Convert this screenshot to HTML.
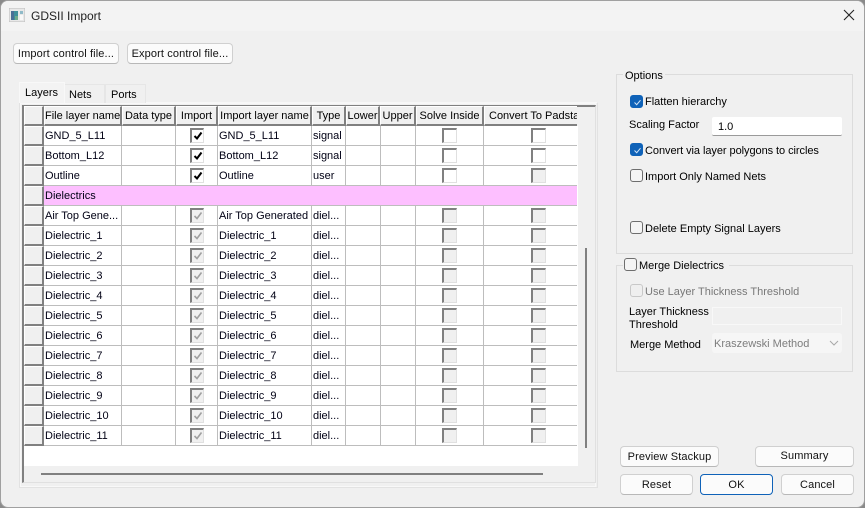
<!DOCTYPE html>
<html><head><meta charset="utf-8"><title>GDSII Import</title>
<style>
html,body{margin:0;padding:0;width:865px;height:508px;overflow:hidden;background:#8a8a8a}
*{box-sizing:border-box}
body{font-family:"Liberation Sans",sans-serif;font-size:11px;color:#000}
#win{position:absolute;left:0;top:0;width:865px;height:508px;background:#f0f0f0;border:1px solid #a0a0a0;border-radius:8px;overflow:hidden}
#tb{position:absolute;left:0;top:0;width:863px;height:30px;background:#f3f3f3}
.a{position:absolute;white-space:nowrap;line-height:14px}
.btn{position:absolute;background:#fbfbfb;border:1px solid #d0d0d0;border-bottom-color:#b8b8b8;border-radius:4px;text-align:center;white-space:nowrap;line-height:21px;color:#111;letter-spacing:.12px}
.tab{position:absolute;text-align:left;line-height:17px}
.h{position:absolute;top:106px;height:20px;background:#f0f0f0;border-top:1px solid #fff;border-left:1px solid #fff;border-right:2px solid #808080;border-bottom:2px solid #808080;line-height:19px;text-align:center;white-space:nowrap;overflow:hidden}
.rh{position:absolute;left:24px;width:20px;height:20px;background:#f0f0f0;border-top:1px solid #fff;border-left:1px solid #fff;border-right:2px solid #808080;border-bottom:2px solid #808080}
.gl{position:absolute;background:#bdbdbd}
.t{position:absolute;white-space:nowrap;line-height:14px;color:#000014;margin-top:1px}
.c{position:absolute;width:15px;height:15px;background:#fff;border-top:2px solid #808080;border-left:2px solid #808080;border-right:1px solid #e0e0e0;border-bottom:1px solid #e0e0e0}
.c.g{background:#f0f0f0}
.c svg{position:absolute;left:0;top:0}
.i{width:14px}
.cb{position:absolute;width:13px;height:13px;border-radius:3px;background:#f4f4f4;border:1px solid #6e6e6e}
.cb.on{background:#0f62b8;border-color:#0f62b8}
.cb.dis{border-color:#c8c8c8;background:#efefef}
.cb svg{position:absolute;left:1px;top:1px}
.gb{position:absolute;border:1px solid #dcdcdc}
.l{margin-top:1px}
</style></head><body>
<div id="win">
<div id="tb"></div>
</div>

<!-- title bar -->
<svg class="a" style="left:9px;top:8px" width="16" height="14" viewBox="0 0 16 14"><rect x="0" y="0" width="16" height="14" fill="#e8e8e8" stroke="#bdbdbd"/><rect x="2" y="3" width="7" height="9" fill="#3f8f9a"/><rect x="2" y="3" width="3" height="9" fill="#4a6f96"/><rect x="6" y="8" width="3" height="4" fill="#6fa98a"/><rect x="11" y="3" width="3" height="3" fill="#8fbac8"/><rect x="11" y="7" width="3" height="5" fill="#f8f8f8"/></svg>
<div class="a" style="left:31px;top:9px;font-size:12px;color:#222">GDSII Import</div>
<svg class="a" style="left:843px;top:9px" width="12" height="12" viewBox="0 0 12 12"><path d="M1 1L11 11M11 1L1 11" stroke="#222" stroke-width="1.1" fill="none"/></svg>

<!-- top buttons -->
<div class="btn" style="left:13px;top:43px;width:106px;height:21px">Import control file...</div>
<div class="btn" style="left:127px;top:43px;width:106px;height:21px">Export control file...</div>

<!-- tab pane -->
<div class="a" style="left:19px;top:102px;width:579px;height:386px;border:1px solid #e2e2e2;border-top:1px solid #f8f8f8;background:#f0f0f0"></div>
<div class="a" style="left:20px;top:103px;width:576px;height:384px;border:1px solid #f8f8f8"></div>
<div class="tab" style="left:64px;top:84px;width:41px;height:19px;background:#f0f0f0;border:1px solid #e6e6e6;border-bottom:0;padding:2px 0 0 4px">Nets</div>
<div class="tab" style="left:105px;top:84px;width:41px;height:19px;background:#f0f0f0;border:1px solid #e6e6e6;border-bottom:0;padding:2px 0 0 5px">Ports</div>
<div class="tab" style="left:19px;top:82px;width:46px;height:21px;background:#f3f3f3;border:1px solid #f8f8f8;border-bottom:0;padding:2px 0 0 5px">Layers</div>

<!-- table frame -->
<div class="a" style="left:22px;top:105px;width:574px;height:378px;border-top:2px solid #808080;border-left:2px solid #808080;border-right:1px solid #e0e0e0;border-bottom:1px solid #e0e0e0;background:#f0f0f0"></div>
<div class="a" style="left:24px;top:126px;width:554px;height:340px;background:#fff"></div>
<div class="a" style="left:41px;top:473px;width:502px;height:2px;background:#808080"></div>
<div class="a" style="left:585px;top:248px;width:2px;height:200px;background:#808080"></div>

<!-- header -->
<div class="h" style="left:24px;width:20px"></div>
<div class="h" style="left:44px;width:78px">File layer name</div>
<div class="h" style="left:122px;width:54px">Data type</div>
<div class="h" style="left:176px;width:42px">Import</div>
<div class="h" style="left:218px;width:94px">Import layer name</div>
<div class="h" style="left:312px;width:34px">Type</div>
<div class="h" style="left:346px;width:34px">Lower</div>
<div class="h" style="left:380px;width:36px">Upper</div>
<div class="h" style="left:416px;width:68px">Solve Inside</div>
<div class="h" style="left:484px;width:93px;text-align:left;padding-left:4px;border-right:0">Convert To Padstack</div>

<!-- pink row -->
<div class="a" style="left:44px;top:185px;width:533px;height:21px;background:#fdbfff"></div>

<!-- vertical grid lines -->
<div class="gl" style="left:121px;top:126px;width:1px;height:59px"></div><div class="gl" style="left:121px;top:206px;width:1px;height:240px"></div>
<div class="gl" style="left:175px;top:126px;width:1px;height:59px"></div><div class="gl" style="left:175px;top:206px;width:1px;height:240px"></div>
<div class="gl" style="left:217px;top:126px;width:1px;height:59px"></div><div class="gl" style="left:217px;top:206px;width:1px;height:240px"></div>
<div class="gl" style="left:311px;top:126px;width:1px;height:59px"></div><div class="gl" style="left:311px;top:206px;width:1px;height:240px"></div>
<div class="gl" style="left:345px;top:126px;width:1px;height:59px"></div><div class="gl" style="left:345px;top:206px;width:1px;height:240px"></div>
<div class="gl" style="left:380px;top:126px;width:1px;height:59px"></div><div class="gl" style="left:380px;top:206px;width:1px;height:240px"></div>
<div class="gl" style="left:415px;top:126px;width:1px;height:59px"></div><div class="gl" style="left:415px;top:206px;width:1px;height:240px"></div>
<div class="gl" style="left:483px;top:126px;width:1px;height:59px"></div><div class="gl" style="left:483px;top:206px;width:1px;height:240px"></div>

<!-- horizontal grid lines -->
<div class="gl" style="left:44px;top:145px;width:533px;height:1px"></div>
<div class="gl" style="left:44px;top:165px;width:533px;height:1px"></div>
<div class="gl" style="left:44px;top:185px;width:533px;height:1px"></div>
<div class="gl" style="left:44px;top:205px;width:533px;height:1px"></div>
<div class="gl" style="left:44px;top:225px;width:533px;height:1px"></div>
<div class="gl" style="left:44px;top:245px;width:533px;height:1px"></div>
<div class="gl" style="left:44px;top:265px;width:533px;height:1px"></div>
<div class="gl" style="left:44px;top:285px;width:533px;height:1px"></div>
<div class="gl" style="left:44px;top:305px;width:533px;height:1px"></div>
<div class="gl" style="left:44px;top:325px;width:533px;height:1px"></div>
<div class="gl" style="left:44px;top:345px;width:533px;height:1px"></div>
<div class="gl" style="left:44px;top:365px;width:533px;height:1px"></div>
<div class="gl" style="left:44px;top:385px;width:533px;height:1px"></div>
<div class="gl" style="left:44px;top:405px;width:533px;height:1px"></div>
<div class="gl" style="left:44px;top:425px;width:533px;height:1px"></div>
<div class="gl" style="left:44px;top:445px;width:533px;height:1px"></div>

<!-- row headers -->
<div class="rh" style="top:126px"></div><div class="rh" style="top:146px"></div><div class="rh" style="top:166px"></div><div class="rh" style="top:186px"></div><div class="rh" style="top:206px"></div><div class="rh" style="top:226px"></div><div class="rh" style="top:246px"></div><div class="rh" style="top:266px"></div><div class="rh" style="top:286px"></div><div class="rh" style="top:306px"></div><div class="rh" style="top:326px"></div><div class="rh" style="top:346px"></div><div class="rh" style="top:366px"></div><div class="rh" style="top:386px"></div><div class="rh" style="top:406px"></div><div class="rh" style="top:426px"></div>

<!-- column text -->
<div class="t" style="left:45px;top:128px">GND_5_L11</div><div class="t" style="left:219px;top:128px">GND_5_L11</div><div class="t" style="left:313px;top:128px">signal</div>
<div class="t" style="left:45px;top:148px">Bottom_L12</div><div class="t" style="left:219px;top:148px">Bottom_L12</div><div class="t" style="left:313px;top:148px">signal</div>
<div class="t" style="left:45px;top:168px">Outline</div><div class="t" style="left:219px;top:168px">Outline</div><div class="t" style="left:313px;top:168px">user</div>
<div class="t" style="left:45px;top:188px">Dielectrics</div>
<div class="t" style="left:45px;top:208px">Air Top Gene...</div><div class="t" style="left:219px;top:208px">Air Top Generated</div><div class="t" style="left:313px;top:208px">diel...</div>
<div class="t" style="left:45px;top:228px">Dielectric_1</div><div class="t" style="left:219px;top:228px">Dielectric_1</div><div class="t" style="left:313px;top:228px">diel...</div>
<div class="t" style="left:45px;top:248px">Dielectric_2</div><div class="t" style="left:219px;top:248px">Dielectric_2</div><div class="t" style="left:313px;top:248px">diel...</div>
<div class="t" style="left:45px;top:268px">Dielectric_3</div><div class="t" style="left:219px;top:268px">Dielectric_3</div><div class="t" style="left:313px;top:268px">diel...</div>
<div class="t" style="left:45px;top:288px">Dielectric_4</div><div class="t" style="left:219px;top:288px">Dielectric_4</div><div class="t" style="left:313px;top:288px">diel...</div>
<div class="t" style="left:45px;top:308px">Dielectric_5</div><div class="t" style="left:219px;top:308px">Dielectric_5</div><div class="t" style="left:313px;top:308px">diel...</div>
<div class="t" style="left:45px;top:328px">Dielectric_6</div><div class="t" style="left:219px;top:328px">Dielectric_6</div><div class="t" style="left:313px;top:328px">diel...</div>
<div class="t" style="left:45px;top:348px">Dielectric_7</div><div class="t" style="left:219px;top:348px">Dielectric_7</div><div class="t" style="left:313px;top:348px">diel...</div>
<div class="t" style="left:45px;top:368px">Dielectric_8</div><div class="t" style="left:219px;top:368px">Dielectric_8</div><div class="t" style="left:313px;top:368px">diel...</div>
<div class="t" style="left:45px;top:388px">Dielectric_9</div><div class="t" style="left:219px;top:388px">Dielectric_9</div><div class="t" style="left:313px;top:388px">diel...</div>
<div class="t" style="left:45px;top:408px">Dielectric_10</div><div class="t" style="left:219px;top:408px">Dielectric_10</div><div class="t" style="left:313px;top:408px">diel...</div>
<div class="t" style="left:45px;top:428px">Dielectric_11</div><div class="t" style="left:219px;top:428px">Dielectric_11</div><div class="t" style="left:313px;top:428px">diel...</div>

<!-- import checkboxes -->
<div class="c i" style="left:190px;top:128px"><svg width="12" height="12"><path d="M2.5 6L5 8.5L9.5 2.5" stroke="#000" stroke-width="2" fill="none"/></svg></div>
<div class="c i" style="left:190px;top:148px"><svg width="12" height="12"><path d="M2.5 6L5 8.5L9.5 2.5" stroke="#000" stroke-width="2" fill="none"/></svg></div>
<div class="c i" style="left:190px;top:168px"><svg width="12" height="12"><path d="M2.5 6L5 8.5L9.5 2.5" stroke="#000" stroke-width="2" fill="none"/></svg></div>
<div class="c g i" style="left:190px;top:208px"><svg width="12" height="12"><path d="M2.5 6L5 8.5L9.5 2.5" stroke="#a0a0a0" stroke-width="1.6" fill="none"/></svg></div>
<div class="c g i" style="left:190px;top:228px"><svg width="12" height="12"><path d="M2.5 6L5 8.5L9.5 2.5" stroke="#a0a0a0" stroke-width="1.6" fill="none"/></svg></div>
<div class="c g i" style="left:190px;top:248px"><svg width="12" height="12"><path d="M2.5 6L5 8.5L9.5 2.5" stroke="#a0a0a0" stroke-width="1.6" fill="none"/></svg></div>
<div class="c g i" style="left:190px;top:268px"><svg width="12" height="12"><path d="M2.5 6L5 8.5L9.5 2.5" stroke="#a0a0a0" stroke-width="1.6" fill="none"/></svg></div>
<div class="c g i" style="left:190px;top:288px"><svg width="12" height="12"><path d="M2.5 6L5 8.5L9.5 2.5" stroke="#a0a0a0" stroke-width="1.6" fill="none"/></svg></div>
<div class="c g i" style="left:190px;top:308px"><svg width="12" height="12"><path d="M2.5 6L5 8.5L9.5 2.5" stroke="#a0a0a0" stroke-width="1.6" fill="none"/></svg></div>
<div class="c g i" style="left:190px;top:328px"><svg width="12" height="12"><path d="M2.5 6L5 8.5L9.5 2.5" stroke="#a0a0a0" stroke-width="1.6" fill="none"/></svg></div>
<div class="c g i" style="left:190px;top:348px"><svg width="12" height="12"><path d="M2.5 6L5 8.5L9.5 2.5" stroke="#a0a0a0" stroke-width="1.6" fill="none"/></svg></div>
<div class="c g i" style="left:190px;top:368px"><svg width="12" height="12"><path d="M2.5 6L5 8.5L9.5 2.5" stroke="#a0a0a0" stroke-width="1.6" fill="none"/></svg></div>
<div class="c g i" style="left:190px;top:388px"><svg width="12" height="12"><path d="M2.5 6L5 8.5L9.5 2.5" stroke="#a0a0a0" stroke-width="1.6" fill="none"/></svg></div>
<div class="c g i" style="left:190px;top:408px"><svg width="12" height="12"><path d="M2.5 6L5 8.5L9.5 2.5" stroke="#a0a0a0" stroke-width="1.6" fill="none"/></svg></div>
<div class="c g i" style="left:190px;top:428px"><svg width="12" height="12"><path d="M2.5 6L5 8.5L9.5 2.5" stroke="#a0a0a0" stroke-width="1.6" fill="none"/></svg></div>

<!-- solve inside checkboxes -->
<div class="c" style="left:442px;top:128px"></div><div class="c" style="left:442px;top:148px"></div><div class="c" style="left:442px;top:168px"></div>
<div class="c g" style="left:442px;top:208px"></div><div class="c g" style="left:442px;top:228px"></div><div class="c g" style="left:442px;top:248px"></div><div class="c g" style="left:442px;top:268px"></div><div class="c g" style="left:442px;top:288px"></div><div class="c g" style="left:442px;top:308px"></div><div class="c g" style="left:442px;top:328px"></div><div class="c g" style="left:442px;top:348px"></div><div class="c g" style="left:442px;top:368px"></div><div class="c g" style="left:442px;top:388px"></div><div class="c g" style="left:442px;top:408px"></div><div class="c g" style="left:442px;top:428px"></div>

<!-- convert checkboxes -->
<div class="c" style="left:531px;top:128px"></div><div class="c" style="left:531px;top:148px"></div><div class="c g" style="left:531px;top:168px"></div>
<div class="c g" style="left:531px;top:208px"></div><div class="c g" style="left:531px;top:228px"></div><div class="c g" style="left:531px;top:248px"></div><div class="c g" style="left:531px;top:268px"></div><div class="c g" style="left:531px;top:288px"></div><div class="c g" style="left:531px;top:308px"></div><div class="c g" style="left:531px;top:328px"></div><div class="c g" style="left:531px;top:348px"></div><div class="c g" style="left:531px;top:368px"></div><div class="c g" style="left:531px;top:388px"></div><div class="c g" style="left:531px;top:408px"></div><div class="c g" style="left:531px;top:428px"></div>

<!-- options group -->
<div class="gb" style="left:616px;top:74px;width:237px;height:180px"></div>
<div class="a l" style="left:623px;top:68px;background:#f0f0f0;padding:0 2px">Options</div>
<div class="cb on" style="left:630px;top:95px"><svg width="11" height="11"><path d="M2.5 5.5L4.7 7.7L8.5 3.2" stroke="#cfe3f7" stroke-width="1" fill="none"/></svg></div>
<div class="a l" style="left:645px;top:94px">Flatten hierarchy</div>
<div class="a l" style="left:629px;top:117px">Scaling Factor</div>
<div class="a" style="left:712px;top:117px;width:130px;height:19px;background:#fff;border-bottom:1px solid #9a9a9a;border-radius:2px;padding:3px 6px;line-height:14px">1.0</div>
<div class="cb on" style="left:630px;top:143px"><svg width="11" height="11"><path d="M2.5 5.5L4.7 7.7L8.5 3.2" stroke="#cfe3f7" stroke-width="1" fill="none"/></svg></div>
<div class="a l" style="left:645px;top:143px;letter-spacing:-.06px">Convert via layer polygons to circles</div>
<div class="cb" style="left:630px;top:169px"></div>
<div class="a l" style="left:645px;top:169px">Import Only Named Nets</div>
<div class="cb" style="left:630px;top:221px"></div>
<div class="a l" style="left:645px;top:221px">Delete Empty Signal Layers</div>

<!-- merge group -->
<div class="gb" style="left:616px;top:265px;width:237px;height:107px"></div>
<div class="a" style="left:623px;top:258px;width:106px;height:14px;background:#f0f0f0"></div>
<div class="cb" style="left:624px;top:258px"></div>
<div class="a l" style="left:639px;top:258px">Merge Dielectrics</div>
<div class="cb dis" style="left:630px;top:284px"></div>
<div class="a l" style="left:645px;top:284px;color:#787878">Use Layer Thickness Threshold</div>
<div class="a l" style="left:629px;top:304px">Layer Thickness</div>
<div class="a l" style="left:629px;top:317px">Threshold</div>
<div class="a" style="left:712px;top:307px;width:130px;height:18px;background:#f0f0f0;border:1px solid #f8f8f8"></div>
<div class="a l" style="left:630px;top:337px">Merge Method</div>
<div class="a" style="left:712px;top:333px;width:130px;height:20px;background:#f6f6f6;border-radius:3px;padding:4px 2px;color:#7d7d7d;line-height:14px">Kraszewski Method</div>
<svg class="a" style="left:829px;top:339px" width="10" height="8"><path d="M1 2L5 6L9 2" stroke="#a8a8a8" fill="none"/></svg>

<!-- bottom buttons -->
<div class="btn" style="left:620px;top:446px;width:99px;height:21px">Preview Stackup</div>
<div class="btn" style="left:755px;top:446px;width:99px;height:21px;line-height:19px">Summary</div>
<div class="btn" style="left:620px;top:474px;width:73px;height:21px">Reset</div>
<div class="btn" style="left:700px;top:474px;width:73px;height:21px;border:1px solid #0f62b8">OK</div>
<div class="btn" style="left:781px;top:474px;width:73px;height:21px">Cancel</div>
</body></html>
